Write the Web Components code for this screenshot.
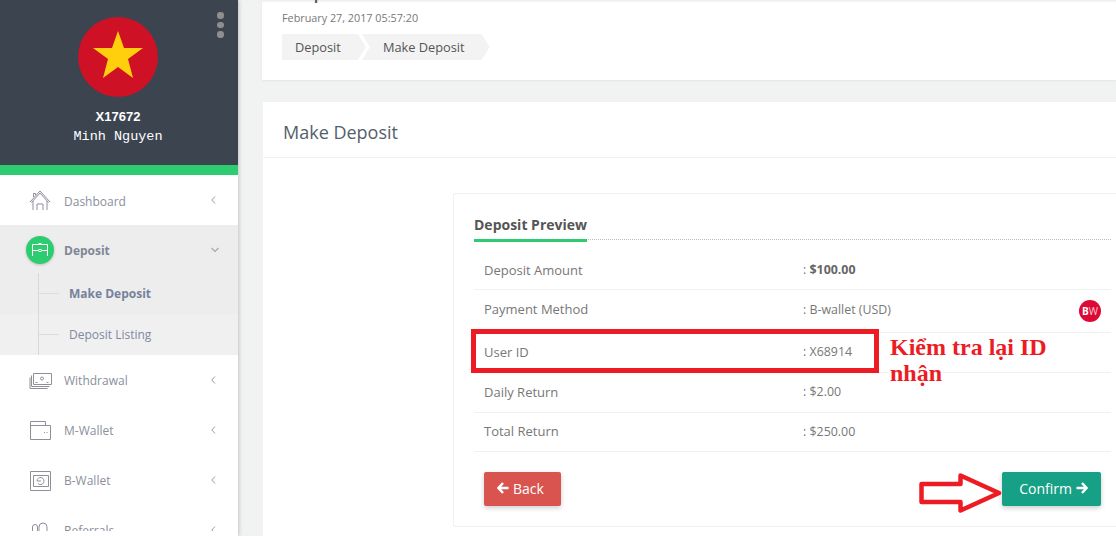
<!DOCTYPE html>
<html>
<head>
<meta charset="utf-8">
<title>Make Deposit</title>
<style>
  html, body { margin: 0; height: 536px; overflow: hidden; background: #f1f2f2; }
  body { font-family: "Open Sans", sans-serif; }
</style>
</head>
<body>
<app-shell>
  <side-bar slot="side"></side-bar>
  <top-card slot="main"></top-card>
  <deposit-panel slot="main"></deposit-panel>
</app-shell>

<script>
const ICONS = {
  home: '<path d="M1 13 L11 2 L21 13 M2.5 13.500 L11 4 L19.500 13.500 M4 12 V21 M18 12 V21 M8 21 V15 H14 V21 M4.500 8 V4.500 H6.500 V6"/>',
  cash: '<path d="M4.500 4.500 H22.500 V15.500 H4.500 Z M2.500 6.500 V17.500 H20.500 M1 8.500 V19.500 H18.500 M6.500 13.500 H8.500 M17.500 13.500 H19.500"/><circle cx="13" cy="9.500" r="1.500"/>',
  wallet: '<path d="M1.500 2.500 H16.500 V6.500 M1.500 2.500 V20.500 H21.500 V6.500 H1.500 M15 13.500 H16 M17.500 13.500 H18.500"/>',
  safe: '<path d="M1.500 2.500 H21.500 V21.500 H1.500 Z M4.500 6.500 H19.500 V17.500 H4.500 Z M8 12 a3.500 3.500 0 1 1 1 2.500 M8 12 H12"/>',
  users: '<path d="M3.500 16 V8 a2.500 2.500 0 0 1 5 0 V16 M10 16 V8 a4 4 0 0 1 8 0 V16"/>'
};

class AppShell extends HTMLElement {
  constructor() {
    super();
    this._shadowRoot = this.attachShadow({ mode: "open" });
    this._shadowRoot.innerHTML = `
      <style>
        :host { display: flex; height: 536px; overflow: hidden; position: relative; }
        .side { flex: 0 0 238px; position: relative; z-index: 2; box-shadow: 1px 0 4px rgba(0,0,0,.2); background: #fff; }
        .main { flex: 1; min-width: 0; padding-left: 24px; box-sizing: border-box; }
      </style>
      <div class="side"><slot name="side"></slot></div>
      <div class="main"><slot name="main"></slot></div>
    `;
  }
}

class SideBar extends HTMLElement {
  constructor() {
    super();
    this._shadowRoot = this.attachShadow({ mode: "open" });
    this._shadowRoot.innerHTML = `
      <style>
        :host { display: block; height: 531px; overflow: hidden; }
        .profile { height: 165px; background: #3c4450; border-bottom: 10px solid #2ecc71; position: relative;
          display: flex; flex-direction: column; align-items: center; padding-right: 2px; }
        .flag { margin-top: 17px; width: 80px; height: 80px; display: block; }
        .id { margin-top: 11px; font: bold 13px/17px "Liberation Sans", sans-serif; color: #fff; }
        .name { margin-top: 3px; font: 13.5px/17px "Liberation Mono", monospace; color: #fff; }
        .dots { position: absolute; left: 217px; top: 12px; display: flex; flex-direction: column; gap: 3px; }
        .dots i { width: 6.5px; height: 6.5px; border-radius: 50%; background: #8f8f8f; }
      </style>
      <div class="profile">
        <svg class="flag" viewBox="0 0 80 80">
          <circle cx="40" cy="40" r="40" fill="#cf1126"/>
          <polygon points="40,14 46,31 65,31 50,42 55,61 40,50 25,61 30,42 15,31 34,31" fill="#ffcf0e"/>
        </svg>
        <div class="id">X17672</div>
        <div class="name">Minh Nguyen</div>
        <div class="dots"><i></i><i></i><i></i></div>
      </div>
      <nav-item icon="home" label="Dashboard"></nav-item>
      <nav-group label="Deposit">
        <sub-item active>Make Deposit</sub-item>
        <sub-item>Deposit Listing</sub-item>
      </nav-group>
      <nav-item icon="cash" label="Withdrawal"></nav-item>
      <nav-item icon="wallet" label="M-Wallet"></nav-item>
      <nav-item icon="safe" label="B-Wallet"></nav-item>
      <nav-item icon="users" label="Referrals"></nav-item>
    `;
  }
}

class NavItem extends HTMLElement {
  constructor() {
    super();
    this._shadowRoot = this.attachShadow({ mode: "open" });
  }
  connectedCallback() {
    const icon = ICONS[this.getAttribute("icon")] || "";
    const label = this.getAttribute("label");
    this._shadowRoot.innerHTML = `
      <style>
        :host { display: flex; align-items: center; height: 50px; padding-left: 29px; font-size: 12px; color: #8a8f9c; }
        :host([icon="home"]) .label { padding-top: 2px; }
        svg { width: 23px; height: 22px; fill: none; stroke: #8f8f9a; stroke-width: 1; flex: none; }
        .label { margin-left: 12px; flex: 1; }
        svg.chev { width: 5px; height: 8px; margin-right: 22px; stroke: #9a9aa2; stroke-width: 1; }
      </style>
      <svg viewBox="0 0 23 22">${icon}</svg>
      <span class="label">${label}</span>
      <svg class="chev" viewBox="0 0 5 8"><path d="M4 .5 L.8 4 L4 7.500"/></svg>
    `;
  }
}

class NavGroup extends HTMLElement {
  constructor() {
    super();
    this._shadowRoot = this.attachShadow({ mode: "open" });
  }
  connectedCallback() {
    const label = this.getAttribute("label");
    this._shadowRoot.innerHTML = `
      <style>
        :host { display: block; background: #ededed; font-size: 12px; color: #7f8696; }
        .head { display: flex; align-items: center; height: 48px; box-sizing: border-box; padding: 2px 0 0 26px; }
        .badge { width: 28px; height: 28px; border-radius: 50%; background: #2ecc71; display: flex;
          align-items: center; justify-content: center; box-shadow: 0 1px 3px rgba(0,0,0,.2); }
        .badge svg { width: 16px; height: 14px; fill: none; stroke: #fff; stroke-width: 1; }
        .label { margin-left: 10px; flex: 1; font-weight: 700; }
        .chev { width: 8px; height: 6px; margin-right: 19px; fill: none; stroke: #a8a8ac; stroke-width: 1.2; }
        .subs { position: relative; display: flex; flex-direction: column; }
        .subs::before { content: ""; position: absolute; left: 38px; top: 0; bottom: 0; width: 1px; background: #d9d9d9; }
      </style>
      <div class="head">
        <span class="badge"><svg viewBox="0 0 16 14"><path d="M.5 13 V1.500 H15.500 V13 M.5 7.500 H6 M10 7.500 H15.500 M6.500 .5 H9.500"/><ellipse cx="8" cy="7.500" rx="2" ry="1"/></svg></span>
        <span class="label">${label}</span>
        <svg class="chev" viewBox="0 0 8 6"><path d="M.5 1 L4 4.500 L7.500 1"/></svg>
      </div>
      <div class="subs"><slot></slot></div>
    `;
  }
}

class SubItem extends HTMLElement {
  constructor() {
    super();
    this._shadowRoot = this.attachShadow({ mode: "open" });
    this._shadowRoot.innerHTML = `
      <style>
        :host { display: flex; align-items: center; height: 41px; padding-left: 39px; font-size: 12px; color: #7f8aa0; background: #f0f0f0; }
        :host([active]) { font-weight: 700; background: #ededed; color: #76829b; }
        i { width: 20px; height: 1px; background: #dcdcdc; margin-right: 10px; }
      </style>
      <i></i><slot></slot>
    `;
  }
}

class TopCard extends HTMLElement {
  constructor() {
    super();
    this._shadowRoot = this.attachShadow({ mode: "open" });
    this._shadowRoot.innerHTML = `
      <style>
        :host { display: block; height: 80px; background: #fff; box-sizing: border-box; padding-left: 20px;
          overflow: hidden; box-shadow: 0 1px 2px rgba(0,0,0,.06), inset 0 3px 3px -2px rgba(0,0,0,.1); }
        h1 { margin: -30px 0 0; font-size: 24px; line-height: 35px; height: 41px; font-weight: 400; color: #555; }
        .date { font-size: 10.8px; line-height: 14px; color: #777; }
        .crumbs { display: flex; margin-top: 9px; }
      </style>
      <h1>Deposit</h1>
      <div class="date">February 27, 2017 05:57:20</div>
      <div class="crumbs"><bread-crumb>Deposit</bread-crumb><bread-crumb>Make Deposit</bread-crumb></div>
    `;
  }
}

class BreadCrumb extends HTMLElement {
  constructor() {
    super();
    this._shadowRoot = this.attachShadow({ mode: "open" });
    this._shadowRoot.innerHTML = `
      <style>
        :host { display: block; height: 26px; line-height: 26px; font-size: 12.8px; color: #555; background: #f3f3f3;
          padding: 0 25px 0 13px; margin-right: -4px;
          clip-path: polygon(0 0, calc(100% - 8px) 0, 100% 50%, calc(100% - 8px) 100%, 0 100%); }
        :host(:not(:first-child)) { padding-left: 21px;
          clip-path: polygon(0 0, calc(100% - 8px) 0, 100% 50%, calc(100% - 8px) 100%, 0 100%, 8px 50%); }
      </style>
      <slot></slot>
    `;
  }
}

class DepositPanel extends HTMLElement {
  constructor() {
    super();
    this._shadowRoot = this.attachShadow({ mode: "open" });
    this._shadowRoot.innerHTML = `
      <style>
        :host { display: block; position: relative; margin: 22px 0 0 1px; height: 500px; background: #fff; }
        .title { height: 55px; line-height: 60px; padding-left: 20px; font-size: 18px; color: #555e6b; border-bottom: 1px solid #f1f1f1; }
        .body { padding: 35px 0 0 190px; }
        .box { height: 334px; box-sizing: border-box; border: 1px solid #f0f0f0; border-right: 0; border-radius: 3px 0 0 3px; padding: 19px 5px 0 20px; }
        h4 { margin: 0 0 11px; height: 27px; font-size: 14px; line-height: 24px; font-weight: 700; color: #555; border-bottom: 1px dotted #bbb; box-sizing: border-box; }
        h4 span { display: inline-block; height: 29px; box-sizing: border-box; border-bottom: 3px solid #2ecc71; }
        .actions { display: flex; justify-content: space-between; padding: 20px 10px 0 10px; }
        .mark { position: absolute; left: 208px; top: 227px; width: 398px; height: 34px; border: 5px solid #ed1c24; }
        .note { position: absolute; left: 627px; top: 232px; width: 190px; font: bold 24px/26px "Liberation Serif", serif; color: #ed1c24; }
        .arrow { position: absolute; left: 656px; top: 371px; width: 84px; height: 44px; }
      </style>
      <div class="title">Make Deposit</div>
      <div class="body">
        <div class="box">
          <h4><span>Deposit Preview</span></h4>
          <preview-row h="39" pb="1" label="Deposit Amount" value="$100.00" strong></preview-row>
          <preview-row h="43" pb="4" label="Payment Method" value="B-wallet (USD)" badge></preview-row>
          <preview-row h="40" pb="2" label="User ID" value="X68914"></preview-row>
          <preview-row h="40" pb="2" label="Daily Return" value="$2.00"></preview-row>
          <preview-row h="39" pb="2" label="Total Return" value="$250.00"></preview-row>
          <div class="actions">
            <action-button color="#d9534f" dir="back">Back</action-button>
            <action-button color="#16a085" dir="next">Confirm</action-button>
          </div>
        </div>
      </div>
      <div class="mark"></div>
      <div class="note">Kiểm tra lại ID nhận</div>
      <svg class="arrow" viewBox="0 0 84 44"><path d="M2.5 11 H41.5 V2.5 L80 20 L41.5 37.500 V29 H2.5 Z" fill="#fff" stroke="#ed1c24" stroke-width="4.5" stroke-linejoin="round"/></svg>
    `;
  }
}

class PreviewRow extends HTMLElement {
  constructor() {
    super();
    this._shadowRoot = this.attachShadow({ mode: "open" });
  }
  connectedCallback() {
    const badge = this.hasAttribute("badge") ? '<span class="badge"><b>B</b>W</span>' : "";
    const value = this.hasAttribute("strong") ? `<b>${this.getAttribute("value")}</b>` : this.getAttribute("value");
    this._shadowRoot.innerHTML = `
      <style>
        :host { display: flex; align-items: center; height: ${this.getAttribute("h")}px; box-sizing: border-box; border-bottom: 1px solid #f1f1f1;
          padding: 0 0 ${this.getAttribute("pb")}px 10px; font-size: 13px; color: #777; position: relative; }
        .label { width: 319px; }
        .value { font-size: 12.4px; }
        b { color: #666; }
        .badge { position: absolute; right: 10px; top: 10px; width: 22px; height: 22px; border-radius: 50%; background: #dd0a35;
          color: #f3c9d2; font-size: 10px; line-height: 22px; text-align: center; }
        .badge b { color: #fff; }
      </style>
      <span class="label">${this.getAttribute("label")}</span>
      <span class="value">: ${value}</span>${badge}
    `;
  }
}

class ActionButton extends HTMLElement {
  constructor() {
    super();
    this._shadowRoot = this.attachShadow({ mode: "open" });
  }
  connectedCallback() {
    const back = this.getAttribute("dir") === "back";
    const arrow = `<svg viewBox="0 0 12 12"><path d="${back ? "M6 1 L1.5 6 L6 11 M2 6 H11.5" : "M6 1 L10.5 6 L6 11 M10 6 H.5"}" fill="none" stroke="#fff" stroke-width="2.4"/></svg>`;
    this._shadowRoot.innerHTML = `
      <style>
        :host { display: inline-flex; align-items: center; gap: 4px; height: 34px; box-sizing: border-box; padding: 0 ${back ? 17 : 13}px 2px ${back ? 13 : 17}px; border-radius: 2px;
          background: ${this.getAttribute("color")}; color: #fff; font-size: 14px; box-shadow: 0 2px 5px rgba(0,0,0,.2); }
        svg { width: 12px; height: 12px; }
      </style>
      ${back ? arrow : ""}<slot></slot>${back ? "" : arrow}
    `;
  }
}

customElements.define("app-shell", AppShell);
customElements.define("side-bar", SideBar);
customElements.define("nav-item", NavItem);
customElements.define("nav-group", NavGroup);
customElements.define("sub-item", SubItem);
customElements.define("top-card", TopCard);
customElements.define("bread-crumb", BreadCrumb);
customElements.define("deposit-panel", DepositPanel);
customElements.define("preview-row", PreviewRow);
customElements.define("action-button", ActionButton);
</script>
</body>
</html>
